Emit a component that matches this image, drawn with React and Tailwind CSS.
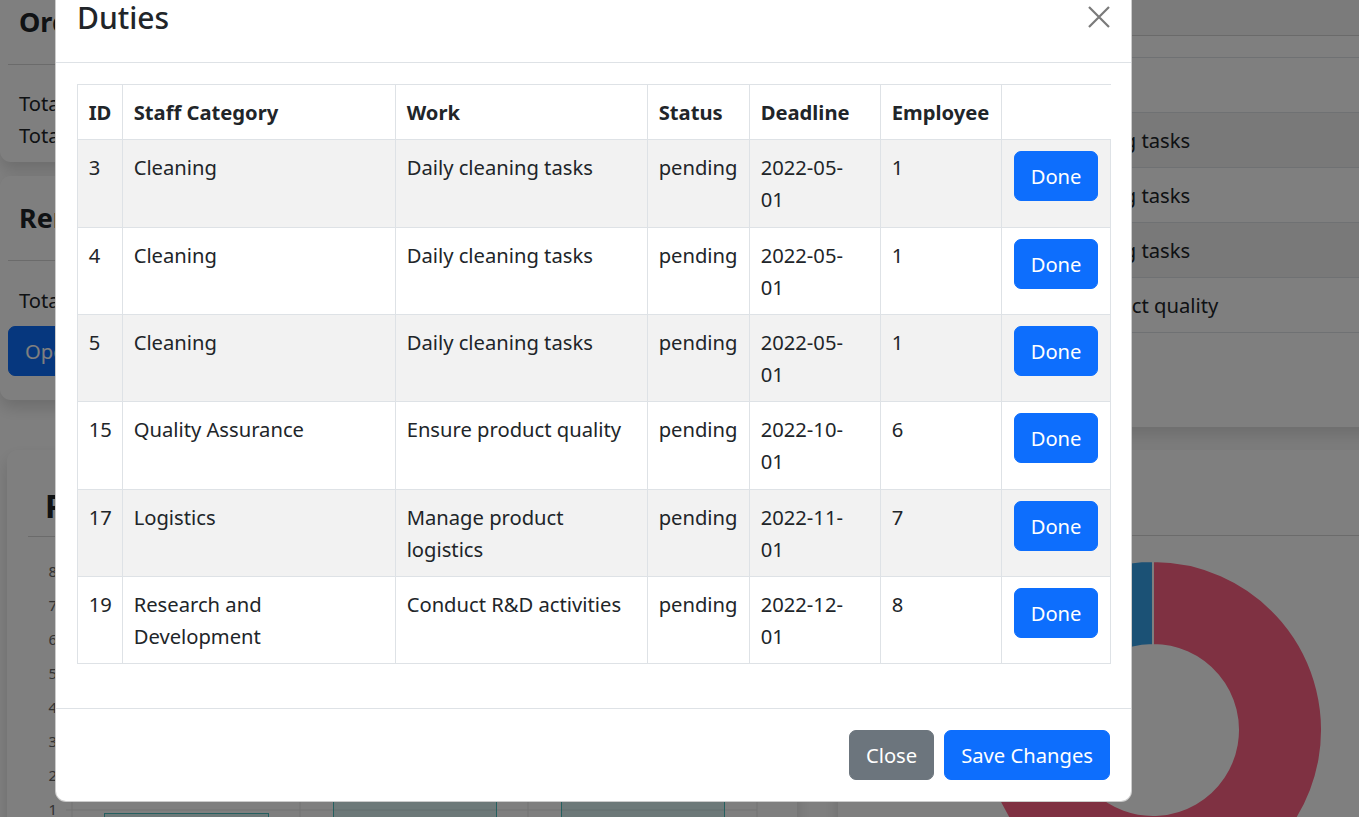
import React from "react";

const rows = [
  { id: 3, cat: "Cleaning", work: "Daily cleaning tasks", status: "pending", deadline: "2022-05-01", emp: 1 },
  { id: 4, cat: "Cleaning", work: "Daily cleaning tasks", status: "pending", deadline: "2022-05-01", emp: 1 },
  { id: 5, cat: "Cleaning", work: "Daily cleaning tasks", status: "pending", deadline: "2022-05-01", emp: 1 },
  { id: 15, cat: "Quality Assurance", work: "Ensure product quality", status: "pending", deadline: "2022-10-01", emp: 6 },
  { id: 17, cat: "Logistics", work: "Manage product logistics", status: "pending", deadline: "2022-11-01", emp: 7 },
  { id: 19, cat: "Research and Development", work: "Conduct R&D activities", status: "pending", deadline: "2022-12-01", emp: 8 },
];

const bgRows = [
  { work: "Daily cleaning tasks" },
  { work: "Daily cleaning tasks" },
  { work: "Daily cleaning tasks" },
  { work: "Ensure product quality" },
];

function arc(cx, cy, R, r, a0, a1) {
  const rad = (d) => ((d - 90) * Math.PI) / 180;
  const p = (rr, d) => [cx + rr * Math.cos(rad(d)), cy + rr * Math.sin(rad(d))];
  const [x0, y0] = p(R, a0);
  const [x1, y1] = p(R, a1);
  const [x2, y2] = p(r, a1);
  const [x3, y3] = p(r, a0);
  const large = a1 - a0 > 180 ? 1 : 0;
  return `M${x0} ${y0} A${R} ${R} 0 ${large} 1 ${x1} ${y1} L${x2} ${y2} A${r} ${r} 0 ${large} 0 ${x3} ${y3}Z`;
}

function BarChart() {
  const ticks = [1, 2, 3, 4, 5, 6, 7, 8];
  const yOf = (v) => 289 - 34 * v;
  return (
    <svg width="748" height="300" viewBox="0 0 748 300" className="block">
      {ticks.map((v) => (
        <g key={v}>
          <line x1="38" x2="729" y1={yOf(v)} y2={yOf(v)} stroke="#e6e6e6" strokeWidth="1" />
          <text x="29" y={yOf(v) + 5} textAnchor="end" fontSize="15" fill="#666" fontFamily="Noto Sans, sans-serif">
            {v}
          </text>
        </g>
      ))}
      {[44, 272, 500, 729].map((x) => (
        <line key={x} x1={x} x2={x} y1="0" y2="300" stroke="#e6e6e6" strokeWidth="1" />
      ))}
      <rect x="76.5" y="258.5" width="164" height="40" fill="rgba(75,192,192,0.2)" stroke="rgb(75,192,192)" />
      <rect x="305.5" y="40.5" width="163" height="260" fill="rgba(75,192,192,0.2)" stroke="rgb(75,192,192)" />
      <rect x="533.5" y="80.5" width="163" height="220" fill="rgba(75,192,192,0.2)" stroke="rgb(75,192,192)" />
    </svg>
  );
}

function Doughnut() {
  return (
    <svg width="340" height="340" viewBox="0 0 340 340" className="block">
      <path d={arc(170, 170, 169, 85, 0, 300)} fill="#ff6384" stroke="#fff" strokeWidth="2" />
      <path d={arc(170, 170, 169, 85, 300, 330)} fill="#ffcd56" stroke="#fff" strokeWidth="2" />
      <path d={arc(170, 170, 169, 85, 330, 359.99)} fill="#36a2eb" stroke="#fff" strokeWidth="2" />
    </svg>
  );
}

function Dashboard() {
  return (
    <div className="flex flex-col text-[#212529]">
      <div className="flex h-[427px] items-start">
        <div className="flex w-[420px] shrink-0 flex-col gap-[14px]">
          <div className="rounded-b-[11px] bg-white px-[8px] shadow-[0_8px_16px_rgba(0,0,0,0.15)]">
            <div className="border-b border-[#d6d6d6] pb-[22px] pl-[11px] pt-[2px] text-[27px] font-bold leading-[40px]">
              Orders Overview
            </div>
            <div className="pb-[11px] pl-[11px] pt-[22px] text-[20.2px] leading-[32px]">
              <div>Total Orders: 24</div>
              <div>Total Amount: 1200</div>
            </div>
          </div>
          <div className="rounded-[11px] bg-white px-[8px] shadow-[0_8px_16px_rgba(0,0,0,0.15)]">
            <div className="border-b border-[#d6d6d6] pb-[22px] pl-[11px] pt-[22px] text-[27px] font-bold leading-[40px]">
              Remaining Duties
            </div>
            <div className="pb-[24px] pt-[23px] text-[20.2px] leading-[32px]">
              <div className="pl-[11px]">Total Duties: 6</div>
              <button className="mt-[10px] rounded-[7px] border border-[#0d6efd] bg-[#0d6efd] px-[16px] py-[8px] text-white">
                Open Duties
              </button>
            </div>
          </div>
        </div>
        <div className="ml-[418px] mt-[-20px] w-[560px] shrink-0 rounded-b-[11px] bg-white shadow-[0_10px_20px_rgba(0,0,0,0.15)]">
          <div className="h-[56px] border-b border-[#d4d4d4] bg-[#f7f7f7] px-[21px] pt-[14px] text-[20.2px] leading-[32px]">
            All Duties
          </div>
          <div className="px-[21px] pb-[94px] pt-[21px]">
            <table className="w-[534px] table-fixed border-collapse text-[20.2px] leading-[32px]">
              <colgroup>
                <col className="w-[45px]" />
                <col className="w-[89px]" />
                <col className="w-[400px]" />
              </colgroup>
              <thead>
                <tr className="border-y border-[#dee2e6]">
                  <th className="px-[11px] py-[11px] text-left font-bold">ID</th>
                  <th className="px-[11px] py-[11px] text-left font-bold">Staff</th>
                  <th className="px-[11px] py-[11px] text-left font-bold">Work</th>
                </tr>
              </thead>
              <tbody>
                {bgRows.map((r, i) => (
                  <tr key={i} className={i % 2 === 0 ? "border-b border-[#dee2e6] bg-[#f2f2f2]" : "border-b border-[#dee2e6]"}>
                    <td className="px-[11px] py-[11px]">{i + 1}</td>
                    <td className="px-[11px] py-[11px]">Cl</td>
                    <td className="whitespace-nowrap px-[11px] py-[11px]">{r.work}</td>
                  </tr>
                ))}
              </tbody>
            </table>
          </div>
        </div>
      </div>
      <div className="mt-[23px] flex items-start">
        <div className="ml-[7px] h-[420px] w-[790px] shrink-0 rounded-[11px] bg-white px-[21px] shadow-[0_8px_16px_rgba(0,0,0,0.15)]">
          <div className="border-b border-[#d6d6d6] pb-[10px] pl-[17px] pt-[36px] text-[32px] font-bold leading-[40px]">
            Production Overview
          </div>
          <div className="mt-[18px]">
            <BarChart />
          </div>
        </div>
        <div className="ml-[41px] h-[420px] w-[560px] shrink-0 rounded-[11px] bg-white shadow-[0_8px_16px_rgba(0,0,0,0.15)]">
          <div className="mx-[21px] border-b border-[#d6d6d6] pb-[9px] pl-[17px] pt-[36px] text-[32px] font-bold leading-[40px]">
            Staff
          </div>
          <div className="ml-[145px] mt-[24px]">
            <Doughnut />
          </div>
        </div>
      </div>
    </div>
  );
}

function Modal() {
  const cell = "border-x border-[#dee2e6] px-[10.67px] py-[11.17px] align-top";
  return (
    <div className="absolute left-[55px] top-[-28px] w-[1077px] rounded-[11px] border border-black/20 bg-white text-[#212529]">
      <div className="flex items-center justify-between border-b border-[#dee2e6] p-[21px]">
        <h4 className="text-[30px] font-medium leading-[47px]">Duties</h4>
        <svg width="22" height="22" viewBox="0 0 22 22" className="-translate-y-[1px]">
          <path d="M1 1L21 21M21 1L1 21" stroke="#7a7a7a" strokeWidth="2.2" />
        </svg>
      </div>
      <div className="p-[21px]">
        <table className="mb-[23px] w-[1033px] table-fixed border-collapse text-[20.2px] leading-[32px]">
          <colgroup>
            <col className="w-[45px]" />
            <col className="w-[273px]" />
            <col className="w-[252px]" />
            <col className="w-[102px]" />
            <col className="w-[131px]" />
            <col className="w-[121px]" />
            <col className="w-[109px]" />
          </colgroup>
          <thead>
            <tr className="border-y border-[#dee2e6]">
              <th className={cell + " text-left font-bold"}>ID</th>
              <th className={cell + " text-left font-bold"}>Staff Category</th>
              <th className={cell + " text-left font-bold"}>Work</th>
              <th className={cell + " text-left font-bold"}>Status</th>
              <th className={cell + " text-left font-bold"}>Deadline</th>
              <th className={cell + " text-left font-bold"}>Employee</th>
            </tr>
          </thead>
          <tbody>
            {rows.map((r, i) => (
              <tr key={r.id} className={i % 2 === 0 ? "border-b border-[#dee2e6] bg-[#f2f2f2]" : "border-b border-[#dee2e6] bg-white"}>
                <td className={cell}>{r.id}</td>
                <td className={cell}>{r.cat}</td>
                <td className={cell}>{r.work}</td>
                <td className={cell}>{r.status}</td>
                <td className={cell}>
                  <div className="max-w-[92px]">{r.deadline}</div>
                </td>
                <td className={cell}>{r.emp}</td>
                <td className={cell}>
                  <button className="ml-[1px] rounded-[7px] border border-[#0d6efd] bg-[#0d6efd] px-[16px] py-[8px] text-white">
                    Done
                  </button>
                </td>
              </tr>
            ))}
          </tbody>
        </table>
      </div>
      <div className="flex justify-end border-t border-[#dee2e6] p-[16px] text-[20.2px] leading-[32px]">
        <button className="m-[5px] rounded-[7px] border border-[#6c757d] bg-[#6c757d] px-[16px] py-[8px] text-white">
          Close
        </button>
        <button className="m-[5px] rounded-[7px] border border-[#0d6efd] bg-[#0d6efd] px-[16px] py-[8px] text-white">
          Save Changes
        </button>
      </div>
    </div>
  );
}

export default function App() {
  return (
    <div className="relative h-[817px] w-full overflow-hidden bg-white font-['Noto_Sans',sans-serif]">
      <Dashboard />
      <div className="absolute inset-0 bg-black/50" />
      <Modal />
    </div>
  );
}
